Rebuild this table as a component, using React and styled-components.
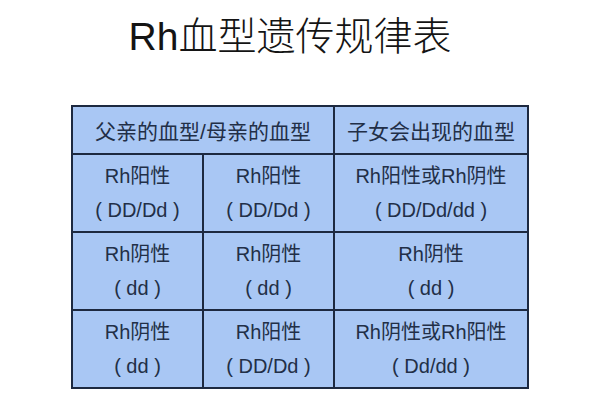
import React from 'react';
import styled, { createGlobalStyle } from 'styled-components';

const GlobalStyle = createGlobalStyle`
  body {
    margin: 0;
    background: #ffffff;
  }
`;

const rows = [
  [['Rh阳性', '( DD/Dd )'], ['Rh阳性', '( DD/Dd )'], ['Rh阳性或Rh阴性', '( DD/Dd/dd )']],
  [['Rh阴性', '( dd )'], ['Rh阴性', '( dd )'], ['Rh阴性', '( dd )']],
  [['Rh阴性', '( dd )'], ['Rh阳性', '( DD/Dd )'], ['Rh阴性或Rh阳性', '( Dd/dd )']],
];

const App = () => {
  return (
    <Page>
      <GlobalStyle />
      <Title>Rh血型遗传规律表</Title>
      <Grid>
        <HeadCell $span={2}>父亲的血型/母亲的血型</HeadCell>
        <HeadCell>子女会出现的血型</HeadCell>
        {rows.map((row, i) =>
          row.map((cell, j) => (
            <Cell key={`${i}-${j}`}>
              <Line>{cell[0]}</Line>
              <Line>{cell[1]}</Line>
            </Cell>
          ))
        )}
      </Grid>
    </Page>
  );
};

export default App;

const Page = styled.div`
  width: 600px;
  height: 400px;
  display: flex;
  flex-direction: column;
  align-items: center;
  background: #fff;
  overflow: hidden;
`;

const Title = styled.h1`
  margin: 0;
  height: 66px;
  display: flex;
  align-items: center;
  padding-right: 20px;
  font-family: "Liberation Sans", "Noto Sans CJK SC", sans-serif;
  font-weight: 300;
  font-size: 39px;
  color: #141414;
`;

const Grid = styled.div`
  margin-top: 39px;
  display: grid;
  grid-template-columns: 129px 129px 192px;
  grid-template-rows: 46px 76px 76px 76px;
  gap: 2px;
  padding: 2px;
  background: #1d2940;
  font-family: "Liberation Sans", "Noto Sans CJK SC", sans-serif;
  color: #222f47;
`;

const HeadCell = styled.div`
  grid-column: span ${({ $span }) => $span || 1};
  background: #a9c7f4;
  display: flex;
  align-items: center;
  justify-content: center;
  font-size: 21px;
`;

const Cell = styled.div`
  background: #a9c7f4;
  display: flex;
  flex-direction: column;
  align-items: center;
  justify-content: center;
  font-size: 20px;
`;

const Line = styled.div`
  line-height: 34px;
  white-space: nowrap;
`;
